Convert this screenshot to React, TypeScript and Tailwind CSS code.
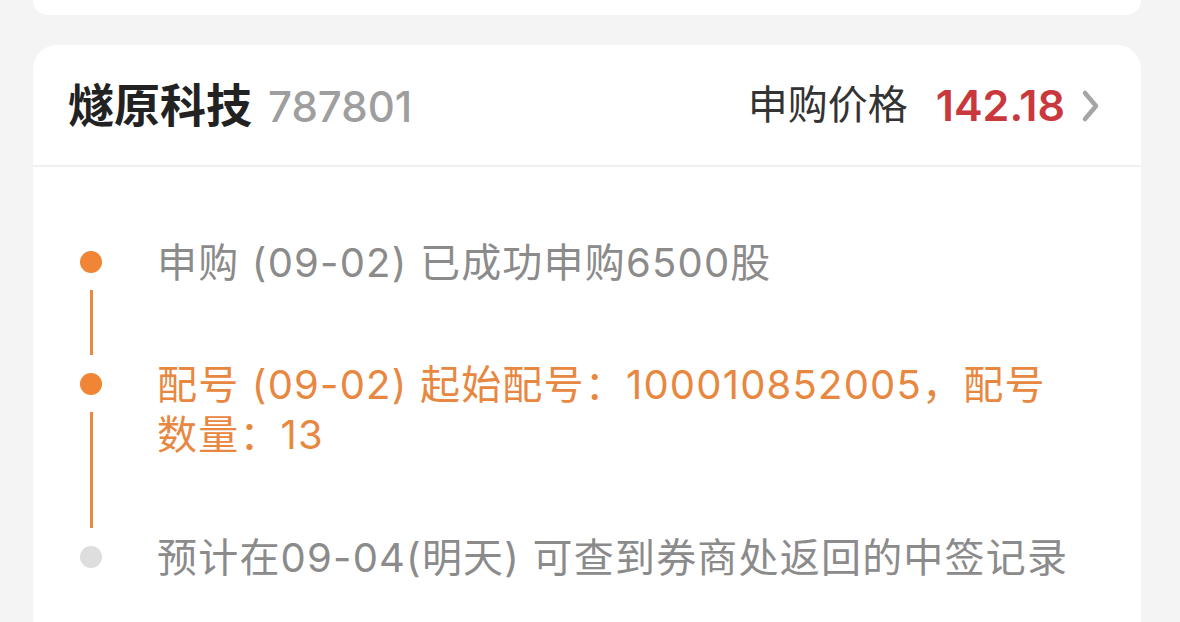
import React from 'react';

interface Step {
    text: string;
    active: boolean;
    highlight: boolean;
    last?: boolean;
}

const steps: Step[] = [
    { text: '申购 (09-02) 已成功申购6500股', active: true, highlight: false },
    { text: '配号 (09-02) 起始配号：100010852005，配号数量：13', active: true, highlight: true },
    { text: '预计在09-04(明天) 可查到券商处返回的中签记录', active: false, highlight: false, last: true },
];

const font = { fontFamily: 'Inter, "Noto Sans CJK SC", "Noto Sans", sans-serif' };

export default function App() {
    return (
        <div className="w-[1180px] h-[622px] overflow-hidden bg-[#f4f4f4] pl-[33px] pr-[39px]" style={font}>
            <div className="h-[15px] bg-white rounded-b-[24px]" />

            <div className="mt-[30px] bg-white rounded-t-[24px] min-h-[600px]">
                <div className="h-[122px] flex items-center justify-between pl-[35px] pr-[40px] border-b-2 border-[#f0f0f0]">
                    <div className="flex items-baseline gap-[16px]">
                        <span className="text-[46px] font-bold text-[#222]">燧原科技</span>
                        <span className="text-[42px] text-[#9e9e9e] font-medium">787801</span>
                    </div>
                    <div className="flex items-center">
                        <span className="text-[40px] text-[#333]">申购价格</span>
                        <span className="ml-[28px] text-[43px] font-semibold text-[#c8383c]">142.18</span>
                        <svg className="ml-[16px] mt-[2px]" width="20" height="34" viewBox="0 0 20 34" fill="none">
                            <path d="M4 4 L15 17 L4 30" stroke="#a5a5a5" strokeWidth="4.5" strokeLinecap="round" strokeLinejoin="round" />
                        </svg>
                    </div>
                </div>

                <div className="pt-[71px] pr-[57px]">
                    {steps.map((step, i) => (
                        <div key={i} className="flex">
                            <div className="w-[124px] shrink-0 flex flex-col items-center pr-[8px]">
                                <div className={`mt-[13px] w-[22px] h-[22px] rounded-full ${step.active ? 'bg-[#ef8535]' : 'bg-[#dedede]'}`} />
                                {!step.last && <div className="mt-[17px] mb-[5px] w-[3px] flex-1 bg-[#e9883f]" />}
                            </div>
                            <p className={`text-[40px] leading-[50px] tracking-[1.2px] ${i === 0 ? 'pb-[72px]' : step.last ? '' : 'pb-[73px]'} ${step.highlight ? 'text-[#e8873f]' : 'text-[#8b8b8b]'}`}>
                                {step.text}
                            </p>
                        </div>
                    ))}
                </div>
            </div>
        </div>
    );
}
